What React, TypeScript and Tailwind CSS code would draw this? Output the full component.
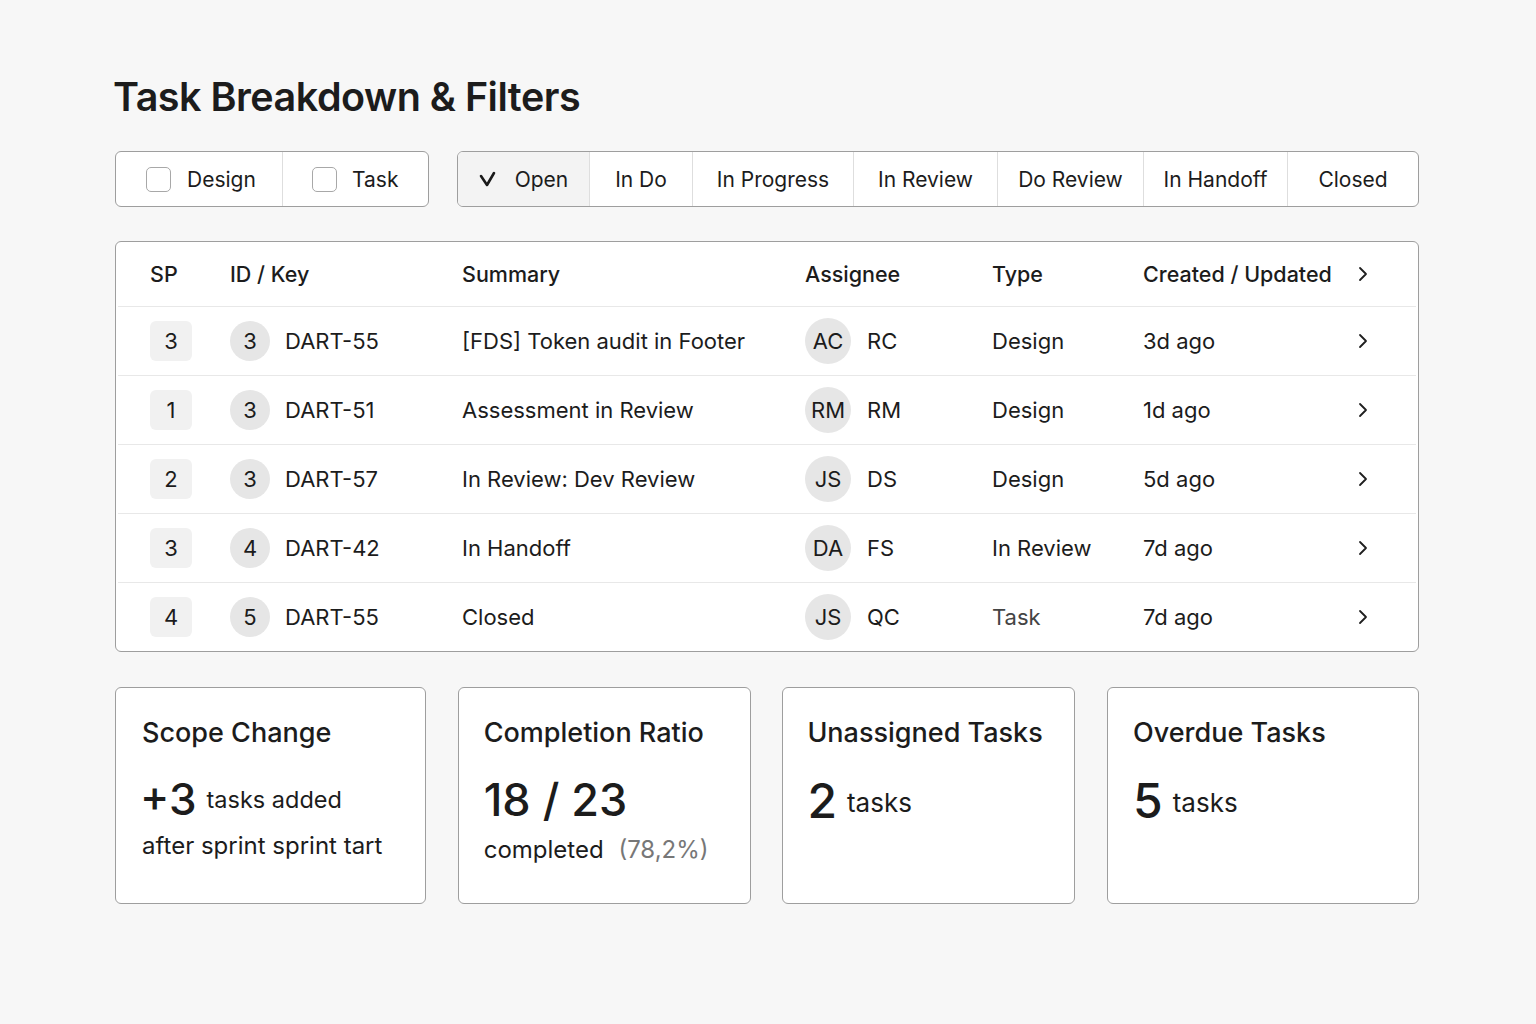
import React from 'react';

const statuses = ['Open', 'In Do', 'In Progress', 'In Review', 'Do Review', 'In Handoff', 'Closed'];
const statusWidths = ['w-[132px]', 'w-[103px]', 'w-[161px]', 'w-[144px]', 'w-[146px]', 'w-[144px]', 'flex-1'];

const rows = [
  { sp: 3, pts: 3, key: 'DART-55', summary: '[FDS] Token audit in Footer', av: 'AC', name: 'RC', type: 'Design', when: '3d ago' },
  { sp: 1, pts: 3, key: 'DART-51', summary: 'Assessment in Review', av: 'RM', name: 'RM', type: 'Design', when: '1d ago' },
  { sp: 2, pts: 3, key: 'DART-57', summary: 'In Review: Dev Review', av: 'JS', name: 'DS', type: 'Design', when: '5d ago' },
  { sp: 3, pts: 4, key: 'DART-42', summary: 'In Handoff', av: 'DA', name: 'FS', type: 'In Review', when: '7d ago' },
  { sp: 4, pts: 5, key: 'DART-55', summary: 'Closed', av: 'JS', name: 'QC', type: 'Task', when: '7d ago' },
];

const cols = 'grid grid-cols-[80px_232px_343px_187px_151px_221px_1fr] items-center pl-[34px]';

const Chevron = () => (
  <svg width="12" height="18" viewBox="0 0 12 18" fill="none" stroke="#1f1f1f" strokeWidth="1.8" strokeLinecap="round" strokeLinejoin="round">
    <path d="M3 3l6 6-6 6" />
  </svg>
);

const Check = () => (
  <svg width="18" height="16" viewBox="0 0 18 16" fill="none" stroke="#1a1a1a" strokeWidth="2.6" strokeLinecap="round" strokeLinejoin="round">
    <path d="M2 5l6 9 7-12" />
  </svg>
);

const App = () => {
  return (
    <div className="min-h-screen bg-[#f7f7f7] text-[#1c1c1c] font-['Inter',sans-serif]">
      <div className="w-[1304px] ml-[115px] pt-[72px]">
        <h1 className="text-[39.5px] font-semibold tracking-[-0.5px] leading-[50px] -ml-[2px]">Task Breakdown &amp; Filters</h1>

        <div className="flex mt-[29px] gap-[28px]">
          <div className="flex h-[56px] w-[314px] bg-white border border-[#9e9e9e] rounded-[6px]">
            <div className="flex items-center w-[167px] border-r border-[#dedede] pl-[30px]">
              <span className="w-[25px] h-[25px] rounded-[5px] border border-[#a8a8a8] bg-white" />
              <span className="ml-[16px] text-[21px] mt-[2px]">Design</span>
            </div>
            <div className="flex items-center flex-1 pl-[29px]">
              <span className="w-[25px] h-[25px] rounded-[5px] border border-[#a8a8a8] bg-white" />
              <span className="ml-[15px] text-[21px] mt-[2px]">Task</span>
            </div>
          </div>

          <div className="flex h-[56px] flex-1 bg-white border border-[#9e9e9e] rounded-[6px] overflow-hidden">
            {statuses.map((s, i) => (
              <div
                key={s}
                className={`${statusWidths[i]} flex items-center justify-center text-[21px] ${i < statuses.length - 1 ? 'border-r border-[#dedede]' : ''} ${i === 0 ? 'bg-[#f3f3f3] gap-[18px]' : ''}`}
              >
                {i === 0 && <Check />}
                <span className="mt-[2px]">{s}</span>
              </div>
            ))}
          </div>
        </div>

        <div className="mt-[34px] bg-white border border-[#9e9e9e] rounded-[6px]">
          <div className={`${cols} h-[64px] text-[21.5px] font-medium`}>
            <span>SP</span>
            <span>ID / Key</span>
            <span>Summary</span>
            <span>Assignee</span>
            <span>Type</span>
            <span>Created / Updated</span>
            <span className="flex items-center -ml-[7px]"><Chevron /></span>
          </div>
          {rows.map((r, i) => (
            <div key={i} className="border-t border-[#e8e8e8] mx-[2px]">
              <div className={`${cols} h-[68px] text-[22px] -ml-[2px]`}>
                <span className="w-[42px] h-[40px] rounded-[6px] bg-[#f1f1f1] flex items-center justify-center">{r.sp}</span>
                <span className="flex items-center">
                  <span className="w-[40px] h-[40px] rounded-full bg-[#e6e6e6] flex items-center justify-center">{r.pts}</span>
                  <span className="ml-[15px]">{r.key}</span>
                </span>
                <span>{r.summary}</span>
                <span className="flex items-center">
                  <span className="w-[46px] h-[46px] rounded-full bg-[#e6e6e6] flex items-center justify-center">{r.av}</span>
                  <span className="ml-[16px]">{r.name}</span>
                </span>
                <span className={r.type === 'Task' ? 'text-[#444]' : ''}>{r.type}</span>
                <span>{r.when}</span>
                <span className="flex items-center -ml-[7px]"><Chevron /></span>
              </div>
            </div>
          ))}
        </div>

        <div className="grid grid-cols-[311px_293px_293px_312px] gap-x-[31.7px] mt-[35px]">
          <div className="h-[217px] bg-white border border-[#9e9e9e] rounded-[6px] pl-[26px] pt-[28px]">
            <div className="text-[27px] font-medium leading-[34px]">Scope Change</div>
            <div className="flex items-center mt-[24px]">
              <span className="text-[44px] font-medium leading-[50px] -ml-[2px]">+3</span>
              <span className="ml-[10px] text-[23.5px] mt-[2px]">tasks added</span>
            </div>
            <div className="text-[24px] mt-[4px]">after sprint sprint tart</div>
          </div>
          <div className="h-[217px] bg-white border border-[#9e9e9e] rounded-[6px] pl-[25px] pt-[28px]">
            <div className="text-[27px] font-medium leading-[34px]">Completion Ratio</div>
            <div className="text-[45px] font-medium leading-[56px] mt-[22px]">18 / 23</div>
            <div className="text-[24px] mt-[4px]">
              completed <span className="ml-[8px] text-[#777]">(78,2%)</span>
            </div>
          </div>
          <div className="h-[217px] bg-white border border-[#9e9e9e] rounded-[6px] pl-[24px] pt-[28px]">
            <div className="text-[27px] font-medium leading-[34px]">Unassigned Tasks</div>
            <div className="flex items-center mt-[24px]">
              <span className="text-[48px] font-medium leading-[54px]">2</span>
              <span className="ml-[10px] text-[26px] mt-[2px]">tasks</span>
            </div>
          </div>
          <div className="h-[217px] bg-white border border-[#9e9e9e] rounded-[6px] pl-[25px] pt-[28px]">
            <div className="text-[27px] font-medium leading-[34px]">Overdue Tasks</div>
            <div className="flex items-center mt-[24px]">
              <span className="text-[48px] font-medium leading-[54px]">5</span>
              <span className="ml-[10px] text-[26px] mt-[2px]">tasks</span>
            </div>
          </div>
        </div>
      </div>
    </div>
  );
};

export default App;
